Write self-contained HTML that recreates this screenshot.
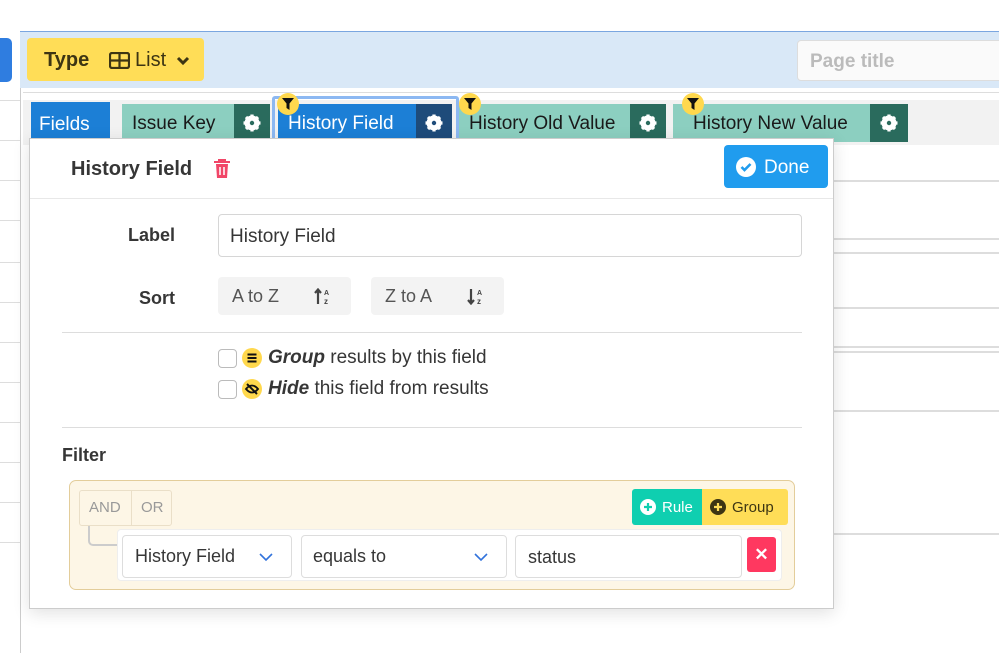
<!DOCTYPE html><html><head><meta charset="utf-8"><style>
*{box-sizing:border-box;margin:0;padding:0}
body{width:999px;height:653px;overflow:hidden;background:#fff;font-family:"Liberation Sans",sans-serif;color:#363636;position:relative}
.a{position:absolute}
.tab{position:absolute;height:37px;font-size:19px;line-height:40px;padding-left:10px;color:#1a1a1a}
.gear{position:absolute;top:0;height:100%;width:36px;display:flex;align-items:center;justify-content:center}
.fb{position:absolute;width:22px;height:22px;border-radius:50%;background:#ffd84d;display:flex;align-items:center;justify-content:center}
.hl{position:absolute;left:0;width:20px;height:1px;background:#ddd}
.rl{position:absolute;left:833px;width:166px;height:2px;background:#ddd}
</style></head><body>
<div class="a" style="left:0;top:38px;width:12px;height:44px;background:#2f7de0;border-radius:0 5px 5px 0"></div>
<div class="a" style="left:20px;top:31px;width:979px;height:57px;background:#d9e8f7;border-top:1px solid #7aa6e0"></div>
<div class="a" style="left:20px;top:88px;width:1px;height:565px;background:#ccc"></div>
<div class="hl" style="top:100px"></div><div class="hl" style="top:140px"></div><div class="hl" style="top:180px"></div><div class="hl" style="top:220px"></div><div class="hl" style="top:262px"></div><div class="hl" style="top:302px"></div><div class="hl" style="top:342px"></div><div class="hl" style="top:382px"></div><div class="hl" style="top:422px"></div><div class="hl" style="top:462px"></div><div class="hl" style="top:502px"></div><div class="hl" style="top:542px"></div>
<div class="a" style="left:27px;top:38px;width:177px;height:43px;background:#ffdd57;border-radius:4px;font-size:20px;line-height:45px;color:#3d3513"><b style="position:absolute;left:17px">Type</b>
<svg class="a" style="left:82px;top:14px" width="21" height="17" viewBox="0 0 21 17"><rect x="1" y="1" width="19" height="15" rx="2" fill="none" stroke="#3d3513" stroke-width="2.2"/><path d="M1 8.5H20M10.5 1V16" stroke="#3d3513" stroke-width="2.2"/></svg>
<span style="position:absolute;left:108px">List</span>
<svg class="a" style="left:149px;top:18px" width="14" height="10" viewBox="0 0 14 10"><path d="M2 2L7 7L12 2" fill="none" stroke="#3d3513" stroke-width="3"/></svg></div>
<div class="a" style="left:797px;top:40px;width:210px;height:41px;background:#fafafa;border:1px solid #ddd;border-radius:4px;font-size:19px;line-height:42px;padding-left:12px;color:#bbb;font-weight:bold">Page title</div>
<div class="a" style="left:23px;top:92px;width:976px;height:1px;background:#ddd"></div>
<div class="a" style="left:23px;top:100px;width:976px;height:45px;background:#f2f2f2"></div>
<div class="rl" style="top:180px"></div><div class="rl" style="top:238px"></div><div class="rl" style="top:252px"></div><div class="rl" style="top:307px"></div><div class="rl" style="top:346px"></div><div class="rl" style="top:351px"></div><div class="rl" style="top:410px"></div><div class="rl" style="top:533px"></div>
<div class="tab" style="left:31px;top:102px;width:79px;height:40px;background:#1c7fd6;color:#fff;line-height:46px;padding-left:8px">Fields</div>
<div class="tab" style="left:122px;top:104px;width:148px;background:#8ccfc0">Issue Key<div class="gear" style="left:112px;background:#2a6b5d"><svg width="18" height="18" viewBox="0 0 18 18"><circle cx="9" cy="9" r="5.5" fill="none" stroke="#fff" stroke-width="4"/><path d="M9 0.5V17.5M0.5 9H17.5M3 3L15 15M15 3L3 15" stroke="#fff" stroke-width="3.2"/><circle cx="9" cy="9" r="2.2" fill="#2a6b5d"/></svg></div></div>
<div class="a" style="left:272px;top:96px;width:187px;height:46px;border:3px solid #8cb8f2;border-radius:3px"></div>
<div class="tab" style="left:278px;top:104px;width:174px;background:#1c7fd6;color:#fff">History Field<div class="gear" style="left:138px;background:#1e4b7a"><svg width="18" height="18" viewBox="0 0 18 18"><circle cx="9" cy="9" r="5.5" fill="none" stroke="#fff" stroke-width="4"/><path d="M9 0.5V17.5M0.5 9H17.5M3 3L15 15M15 3L3 15" stroke="#fff" stroke-width="3.2"/><circle cx="9" cy="9" r="2.2" fill="#1e4b7a"/></svg></div></div>
<div class="tab" style="left:459px;top:104px;width:207px;background:#8ccfc0">History Old Value<div class="gear" style="left:171px;background:#2a6b5d"><svg width="18" height="18" viewBox="0 0 18 18"><circle cx="9" cy="9" r="5.5" fill="none" stroke="#fff" stroke-width="4"/><path d="M9 0.5V17.5M0.5 9H17.5M3 3L15 15M15 3L3 15" stroke="#fff" stroke-width="3.2"/><circle cx="9" cy="9" r="2.2" fill="#2a6b5d"/></svg></div></div>
<div class="tab" style="left:673px;top:104px;width:235px;height:38px;background:#8ccfc0;padding-left:20px">History New Value<div class="gear" style="left:197px;width:38px;background:#2a6b5d"><svg width="18" height="18" viewBox="0 0 18 18"><circle cx="9" cy="9" r="5.5" fill="none" stroke="#fff" stroke-width="4"/><path d="M9 0.5V17.5M0.5 9H17.5M3 3L15 15M15 3L3 15" stroke="#fff" stroke-width="3.2"/><circle cx="9" cy="9" r="2.2" fill="#2a6b5d"/></svg></div></div>
<div class="fb" style="left:277px;top:93px"><svg width="12" height="12" viewBox="0 0 12 12"><path d="M0 0H12L7.5 5.5V12L4.5 10V5.5Z" fill="#111"/></svg></div>
<div class="fb" style="left:459px;top:93px"><svg width="12" height="12" viewBox="0 0 12 12"><path d="M0 0H12L7.5 5.5V12L4.5 10V5.5Z" fill="#111"/></svg></div>
<div class="fb" style="left:682px;top:93px"><svg width="12" height="12" viewBox="0 0 12 12"><path d="M0 0H12L7.5 5.5V12L4.5 10V5.5Z" fill="#111"/></svg></div>
<div class="a" style="left:29px;top:138px;width:805px;height:471px;background:#fff;border:1px solid #ccc;box-shadow:0 4px 16px rgba(0,0,0,.12)">
<div class="a" style="left:41px;top:19px;font-size:20px;font-weight:bold">History Field</div>
<svg class="a" style="left:183px;top:20px" width="18" height="20" viewBox="0 0 18 20"><path d="M1 3H17M6 3V1H12V3" stroke="#f14668" stroke-width="2" fill="none"/><path d="M3 5H15L14 19H4Z" fill="#f14668"/><path d="M7 8V16M11 8V16" stroke="#fff" stroke-width="1.5"/></svg>
<div class="a" style="left:694px;top:6px;width:104px;height:43px;background:#209cee;border-radius:4px;color:#fff;font-size:19px;line-height:45px;padding-left:40px">Done<svg class="a" style="left:12px;top:12px" width="20" height="20" viewBox="0 0 20 20"><circle cx="10" cy="10" r="10" fill="#fff"/><path d="M5.5 10L8.5 13L14.5 7" stroke="#209cee" stroke-width="2.6" fill="none"/></svg></div>
<div class="a" style="left:0;top:59px;width:803px;height:1px;background:#e8e8e8"></div>
<div class="a" style="left:98px;top:86px;font-size:18px;font-weight:bold">Label</div>
<div class="a" style="left:188px;top:75px;width:584px;height:43px;border:1px solid #d6d6d6;border-radius:4px;font-size:19px;line-height:44px;padding-left:11px">History Field</div>
<div class="a" style="left:109px;top:149px;font-size:18px;font-weight:bold">Sort</div>
<div class="a" style="left:188px;top:138px;width:133px;height:38px;background:#f3f3f3;border-radius:4px;font-size:18px;line-height:38px;padding-left:14px;color:#555">A to Z<svg class="a" style="left:96px;top:11px" width="20" height="17" viewBox="0 0 20 17"><path d="M4 16V2M1 5L4 1.5L7 5" stroke="#444" stroke-width="2.2" fill="none"/><text x="10" y="7" font-size="7" font-weight="bold" fill="#444" font-family="Liberation Sans">A</text><text x="10" y="16" font-size="8" font-weight="bold" fill="#444" font-family="Liberation Sans">z</text></svg></div>
<div class="a" style="left:341px;top:138px;width:133px;height:38px;background:#f3f3f3;border-radius:4px;font-size:18px;line-height:38px;padding-left:14px;color:#555">Z to A<svg class="a" style="left:96px;top:11px" width="20" height="17" viewBox="0 0 20 17"><path d="M4 1V15M1 12L4 15.5L7 12" stroke="#444" stroke-width="2.2" fill="none"/><text x="10" y="7" font-size="7" font-weight="bold" fill="#444" font-family="Liberation Sans">A</text><text x="10" y="16" font-size="8" font-weight="bold" fill="#444" font-family="Liberation Sans">z</text></svg></div>
<div class="a" style="left:32px;top:193px;width:740px;height:1px;background:#ddd"></div>
<div class="a" style="left:188px;top:210px;width:19px;height:19px;border:1px solid #bbb;border-radius:4px"></div>
<div class="a" style="left:212px;top:209px;width:20px;height:20px;border-radius:50%;background:#ffd84d"><svg width="20" height="20" viewBox="0 0 20 20"><path d="M5.5 6.5H14.5M5.5 10H14.5M5.5 13.5H14.5" stroke="#111" stroke-width="2"/></svg></div>
<div class="a" style="left:238px;top:208px;font-size:19px"><b><i>Group</i></b> results by this field</div>
<div class="a" style="left:188px;top:241px;width:19px;height:19px;border:1px solid #bbb;border-radius:4px"></div>
<div class="a" style="left:212px;top:240px;width:20px;height:20px;border-radius:50%;background:#ffd84d"><svg width="20" height="20" viewBox="0 0 20 20"><path d="M4 10Q10 3 16 10Q10 17 4 10Z" fill="none" stroke="#111" stroke-width="1.8"/><path d="M5 5L15 15" stroke="#111" stroke-width="2"/></svg></div>
<div class="a" style="left:238px;top:239px;font-size:19px"><b><i>Hide</i></b> this field from results</div>
<div class="a" style="left:32px;top:288px;width:740px;height:1px;background:#ddd"></div>
<div class="a" style="left:32px;top:306px;font-size:18px;font-weight:bold">Filter</div>
<div class="a" style="left:39px;top:341px;width:726px;height:110px;background:#fdf6e6;border:1px solid #e3cd9a;border-radius:7px">
<div class="a" style="left:9px;top:9px;width:93px;height:36px;border:1px solid #eadfc8;border-radius:3px;font-size:15px;line-height:34px;color:#999"><span style="position:absolute;left:9px">AND</span><span style="position:absolute;left:51px;top:0;height:34px;border-left:1px solid #eadfc8;padding-left:9px">OR</span></div>
<div class="a" style="left:18px;top:45px;width:30px;height:20px;border-left:2px solid #ccc;border-bottom:2px solid #ccc;border-radius:0 0 0 5px"></div>
<div class="a" style="left:562px;top:8px;width:70px;height:36px;background:#0fcfb0;color:#fff;font-size:15px;line-height:38px;padding-left:30px;border-radius:3px 0 0 3px">Rule<svg class="a" style="left:8px;top:10px" width="16" height="16" viewBox="0 0 16 16"><circle cx="8" cy="8" r="8" fill="#fff"/><path d="M8 4V12M4 8H12" stroke="#0fcfb0" stroke-width="2.2"/></svg></div>
<div class="a" style="left:632px;top:8px;width:86px;height:36px;background:#ffdd57;color:#3d3513;font-size:15px;line-height:38px;padding-left:30px;border-radius:0 3px 3px 0">Group<svg class="a" style="left:8px;top:10px" width="16" height="16" viewBox="0 0 16 16"><circle cx="8" cy="8" r="8" fill="#3d3513"/><path d="M8 4V12M4 8H12" stroke="#ffdd57" stroke-width="2.2"/></svg></div>
<div class="a" style="left:47px;top:48px;width:665px;height:52px;background:#fff;border:1px solid #eee;border-radius:4px">
<div class="a" style="left:4px;top:5px;width:170px;height:43px;border:1px solid #ddd;border-radius:4px;font-size:18px;line-height:41px;padding-left:12px">History Field<svg class="a" style="left:136px;top:17px" width="14" height="9" viewBox="0 0 14 9"><path d="M1 1L7 7L13 1" fill="none" stroke="#3273dc" stroke-width="1.6"/></svg></div>
<div class="a" style="left:183px;top:5px;width:206px;height:43px;border:1px solid #ddd;border-radius:4px;font-size:18px;line-height:41px;padding-left:11px">equals to<svg class="a" style="left:172px;top:17px" width="14" height="9" viewBox="0 0 14 9"><path d="M1 1L7 7L13 1" fill="none" stroke="#3273dc" stroke-width="1.6"/></svg></div>
<div class="a" style="left:397px;top:5px;width:227px;height:43px;border:1px solid #ddd;border-radius:4px;font-size:18px;line-height:43px;padding-left:12px">status</div>
<div class="a" style="left:629px;top:7px;width:29px;height:35px;background:#ff3860;border-radius:3px;color:#fff;font-weight:bold;font-size:17px;line-height:35px;text-align:center">✕</div>
</div></div></div>
</body></html>
